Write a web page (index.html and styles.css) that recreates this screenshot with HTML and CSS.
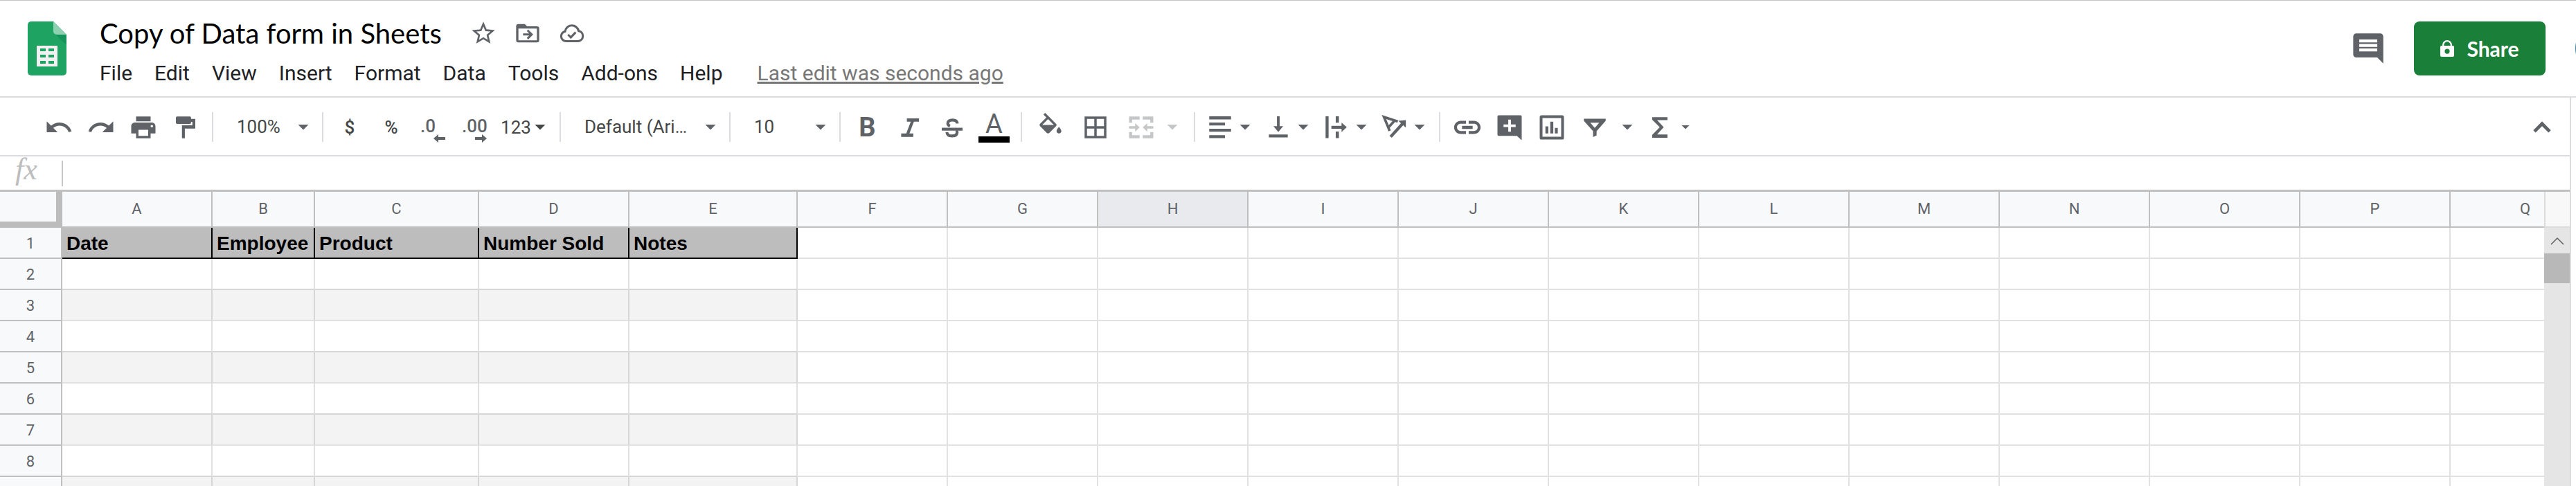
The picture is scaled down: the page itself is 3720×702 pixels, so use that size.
FILE: index.html
```html
<!DOCTYPE html>
<html lang="en">
<head>
<meta charset="utf-8">
<title>Copy of Data form in Sheets</title>
<link rel="stylesheet" href="styles.css">
</head>
<body>
<header class="top">
  <svg class="logo" viewBox="0 0 56 78" aria-hidden="true">
    <path d="M5 0h32l19 19v54a5 5 0 0 1-5 5H5a5 5 0 0 1-5-5V5a5 5 0 0 1 5-5z" fill="#1ea362"/>
    <path d="M38 17l18 17V19z" fill="#16935a"/>
    <path d="M37 0l19 19H42a5 5 0 0 1-5-5z" fill="#8ed1b1"/>
    <path fill-rule="evenodd" fill="#f1f1f1" d="M13 35h30v30H13zM18 39v4h8v-4zM30 39v4h8v-4zM18 48v4h8v-4zM30 48v4h8v-4zM18 57v4h8v-4zM30 57v4h8v-4z"/>
  </svg>
  <div class="doc">
    <div class="title-row">
      <h1 class="title">Copy of Data form in Sheets</h1>
      <div class="title-actions">
        <button class="plain" aria-label="Star"><svg viewBox="0 0 24 24"><path d="M22 9.24l-7.19-.62L12 2 9.19 8.63 2 9.24l5.46 4.73L5.82 21 12 17.27 18.18 21l-1.63-7.03L22 9.24zM12 15.4l-3.76 2.27 1-4.28-3.32-2.88 4.38-.38L12 6.1l1.71 4.04 4.38.38-3.32 2.88 1 4.28L12 15.4z"/></svg></button>
        <button class="plain" aria-label="Move"><svg viewBox="0 0 24 24"><path fill-rule="evenodd" d="M4 4h5.500l2 2H20a2 2 0 0 1 2 2v10a2 2 0 0 1-2 2H4a2 2 0 0 1-2-2V6a2 2 0 0 1 2-2zM4 8v10.200h16V8zM12.500 8.800l4.300 4.300-4.300 4.300-1.300-1.300 2.100-2.100H8v-1.900h5.300l-2.100-2.100z"/></svg></button>
        <button class="plain" aria-label="See document status"><svg viewBox="0 0 24 24"><path d="M7 18.900a4.300 4.300 0 0 1-1-8.500A6 6 0 0 1 17.800 10a4.500 4.500 0 0 1-.5 8.900z" fill="none" stroke="currentColor" stroke-width="1.900"/><path d="M8.600 13.200l2.400 2.400 4.200-4.400" fill="none" stroke="currentColor" stroke-width="1.900"/></svg></button>
      </div>
    </div>
    <nav class="menus">
      <button>File</button><button>Edit</button><button>View</button><button>Insert</button><button>Format</button><button>Data</button><button>Tools</button><button>Add-ons</button><button>Help</button>
      <a class="history" href="#history">Last edit was seconds ago</a>
    </nav>
  </div>
  <div class="top-right">
    <button class="plain comments" aria-label="Open comment history"><svg viewBox="0 0 24 24"><path d="M22 4c0-1.100-.9-2-2-2H4c-1.100 0-2 .9-2 2v12c0 1.100.9 2 2 2h14l4 4zM18 14H6v-2h12v2zm0-3H6V9h12v2zm0-3H6V6h12v2z"/></svg></button>
    <button class="share"><svg viewBox="0 0 20 24" aria-hidden="true"><path fill-rule="evenodd" d="M3 8V7a7 7 0 0 1 14 0v1h1a2 2 0 0 1 2 2v12a2 2 0 0 1-2 2H2a2 2 0 0 1-2-2V10a2 2 0 0 1 2-2zM5.300 8h9.400V7a4.700 4.700 0 0 0-9.400 0zM10 12.500a3.600 3.600 0 1 0 0 7.200 3.600 3.600 0 0 0 0-7.200z"/></svg>Share</button>
    <span class="avatar"></span>
  </div>
</header>
<div class="work">
<main class="editor">
  <div class="toolbar" role="toolbar" aria-label="Main">
    <button class="tool" aria-label="Undo"><svg viewBox="0 0 24 24"><path d="M12.500 8c-2.650 0-5.050.99-6.900 2.600L2 7v9h9l-3.620-3.620c1.390-1.160 3.160-1.880 5.120-1.880 3.540 0 6.550 2.310 7.600 5.500l2.370-.78C21.080 11.030 17.150 8 12.500 8z"/></svg></button>
    <button class="tool" aria-label="Redo"><svg viewBox="0 0 24 24"><path d="M18.400 10.600C16.550 8.990 14.150 8 11.500 8c-4.650 0-8.580 3.030-9.960 7.220L3.900 16c1.050-3.190 4.050-5.500 7.600-5.500 1.950 0 3.730.72 5.120 1.880L13 16h9V7z"/></svg></button>
    <button class="tool" aria-label="Print"><svg viewBox="0 0 24 24"><path d="M19 8H5c-1.660 0-3 1.340-3 3v6h4v4h12v-4h4v-6c0-1.660-1.340-3-3-3zm-3 11H8v-5h8v5zm3-7c-.55 0-1-.45-1-1s.45-1 1-1 1 .45 1 1-.45 1-1 1zm-1-9H6v4h12z"/></svg></button>
    <button class="tool" aria-label="Paint format"><svg viewBox="0 0 24 24"><path d="M5 3h10.500a1 1 0 0 1 1 1v1H20v8h-8.600v8H9V10.300h8.600V7.400h-1.100v.8a1 1 0 0 1-1 1H5a1 1 0 0 1-1-1V4a1 1 0 0 1 1-1z"/></svg></button>
    <span class="sep"></span>
    <label class="pick"><select aria-label="Zoom"><option>100%</option></select></label>
    <span class="sep"></span>
    <button class="tool money">$</button>
    <button class="tool money">%</button>
    <button class="tool decimal" aria-label="Decrease decimal places"><span>.0</span><svg viewBox="0 0 17 12"><path d="M0 6l7-6v4h10v4H7v4z"/></svg></button>
    <button class="tool decimal" aria-label="Increase decimal places"><span>.00</span><svg viewBox="0 0 17 12"><path d="M17 6l-7-6v4H0v4h10v4z"/></svg></button>
    <button class="tool formats">123<i class="caret"></i></button>
    <span class="sep"></span>
    <label class="pick family"><select aria-label="Font"><option>Default (Ari…</option></select></label>
    <span class="sep"></span>
    <label class="pick"><select aria-label="Font size"><option>10</option></select></label>
    <span class="sep"></span>
    <button class="tool bold">B</button>
    <button class="tool" aria-label="Italic"><svg viewBox="0 0 24 24"><path d="M9.500 4.500v2.800h3.200L9 17H4.800v2.800h10V17h-3.200l3.700-9.700h4.200V4.500z"/></svg></button>
    <button class="tool" aria-label="Strikethrough"><svg viewBox="0 0 24 24"><path d="M3.400 12.300h17.200v2.400H3.400z"/><path d="M16.300 8.800c-.2-2-1.800-2.900-4-2.900-2.300 0-3.900 1-3.900 2.800 0 1 .6 1.700 1.800 2.200M7.700 16c.1 2.100 1.800 3.100 4.200 3.100 2.500 0 4.200-1 4.200-2.900 0-.6-.2-1.200-.6-1.700" fill="none" stroke="currentColor" stroke-width="2.400"/></svg></button>
    <button class="tool ink"><span>A</span><i class="swatch"></i></button>
    <span class="sep"></span>
    <button class="tool wide" aria-label="Fill color"><svg viewBox="0 0 24 24"><path d="M16.560 8.940L7.620 0 6.210 1.410l2.380 2.380-5.150 5.150c-.59.59-.59 1.540 0 2.120l5.500 5.500c.29.29.68.44 1.060.44s.77-.15 1.060-.44l5.500-5.500c.59-.58.59-1.530 0-2.120zM5.210 10L10 5.210 14.790 10H5.210zM19 11.500s-2 2.170-2 3.500c0 1.100.9 2 2 2s2-.9 2-2c0-1.330-2-3.500-2-3.500z"/></svg></button>
    <button class="tool wide" aria-label="Borders"><svg viewBox="0 0 24 24"><path d="M3 3v18h18V3H3zm8 16H5v-6h6v6zm0-8H5V5h6v6zm8 8h-6v-6h6v6zm0-8h-6V5h6v6z"/></svg></button>
    <button class="tool merge" aria-label="Merge cells" disabled><svg viewBox="0 0 24 24"><path d="M2 3h8.700v2.600H4.500v2.600H2zM22 3h-8.700v2.600h6.200v2.600H22zM2 21h8.700v-2.600H4.500v-2.600H2zM22 21h-8.700v-2.600h6.200v-2.600H22zM2 11h5V8.500l3.700 3.500L7 15.500V13H2zM22 11h-5V8.500L13.300 12l3.700 3.500V13h5z"/></svg><i class="caret"></i></button>
    <span class="sep"></span>
    <button class="tool split" aria-label="Horizontal align"><svg viewBox="0 0 24 24"><path d="M3 2.800h18v2.600H3zM3 8h13v2.400H3zM3 13.200h18v2.400H3zM3 18.400h13v2.400H3z"/></svg><i class="caret"></i></button>
    <button class="tool split" aria-label="Vertical align"><svg viewBox="0 0 24 24"><path d="M16 11h-2.900V2.800h-2.200V11H8l4 4.800zM4.200 17.800v2.500h15.600v-2.500z"/></svg><i class="caret"></i></button>
    <button class="tool split" aria-label="Text wrapping"><svg viewBox="0 0 24 24"><path d="M3 2.800h2.500v18H3zM11.400 2.800H14v5.400h-2.600zM11.400 15.400H14v5.400h-2.600zM7.800 10.700h8.400V8l4.300 3.900-4.300 3.900v-2.700H7.800z"/></svg><i class="caret"></i></button>
    <button class="tool split" aria-label="Text rotation"><svg viewBox="0 0 24 24"><path d="M14.600 7.200L3.200 3.400l4.700 11.500M12 6.400l-5 5.400" fill="none" stroke="currentColor" stroke-width="2.100"/><path d="M8.700 19.800L18.500 9" fill="none" stroke="currentColor" stroke-width="2.500"/><path d="M21.200 6v6.200L15 6.600z"/></svg><i class="caret"></i></button>
    <span class="sep"></span>
    <button class="tool" aria-label="Insert link"><svg viewBox="1 1 22 22"><path d="M4.200 12c0-1.600 1.200-2.700 2.800-2.700h4V7H7c-2.760 0-5 2.240-5 5s2.240 5 5 5h4v-2.300H7c-1.600 0-2.800-1.100-2.800-2.700zM8 13.200h8v-2.400H8zM17 7h-4v2.300h4c1.600 0 2.800 1.100 2.800 2.700s-1.200 2.700-2.800 2.700h-4V17h4c2.760 0 5-2.240 5-5s-2.240-5-5-5z"/></svg></button>
    <button class="tool" aria-label="Insert comment"><svg viewBox="0 0 24 24"><path fill-rule="evenodd" d="M3 2h18a1 1 0 0 1 1 1v19.500L18 19H3a1 1 0 0 1-1-1V3a1 1 0 0 1 1-1zM10.900 5.600v3.900H7v2.200h3.900v3.900h2.200v-3.900H17V9.500h-3.900V5.600z"/></svg></button>
    <button class="tool" aria-label="Insert chart"><svg viewBox="0 0 24 24"><path fill-rule="evenodd" d="M3.500 2h17A1.500 1.500 0 0 1 22 3.500v17a1.500 1.500 0 0 1-1.500 1.500h-17A1.500 1.500 0 0 1 2 20.500v-17A1.500 1.500 0 0 1 3.500 2zM4.300 4.300v15.400h15.400V4.300zM6.700 11.100h2.400V17H6.700zM10.700 7.300h2.500V17h-2.500zM14.500 12.400h2.400V17h-2.400z"/></svg></button>
    <button class="tool filter" aria-label="Filter"><svg viewBox="0 0 24 24"><path fill-rule="evenodd" d="M3 4.800h18v1.700l-7.500 8.700v3.300L10.600 20v-4.800L3 6.500zM8.300 8.200l3.700 4.200 3.700-4.200z"/></svg><i class="caret"></i></button>
    <button class="tool sum" aria-label="Functions"><svg viewBox="0 0 24 24"><path d="M18.300 3.500H5.700v2.200l6.200 6.200-6.200 6.200v2.400h12.600v-2.600H9.700l5.500-6-5.500-5.900h8.600z"/></svg><i class="caret small"></i></button>
    <button class="tool collapse" aria-label="Hide the menus"><svg viewBox="0 0 24 24"><path d="M7.500 15.600L12 11.100l4.500 4.500 1.600-1.600L12 7.800 5.900 14z"/></svg></button>
  </div>
  <div class="formula">
    <label class="fx" for="formula">fx</label>
    <input id="formula" type="text">
  </div>
  <div class="sheet">
    <div class="grid">
      <table>
        <colgroup><col class="c-num"><col class="c-std"><col class="c-b"><col class="c-c"><col class="c-std"><col class="c-e"><col class="c-std" span="12"></colgroup>
        <thead><tr><td class="corner"></td><th>A</th><th>B</th><th>C</th><th>D</th><th>E</th><th>F</th><th>G</th><th class="hover">H</th><th>I</th><th>J</th><th>K</th><th>L</th><th>M</th><th>N</th><th>O</th><th>P</th><th>Q</th></tr></thead>
        <tbody>
          <tr class="fields"><th>1</th><td>Date</td><td>Employee</td><td>Product</td><td>Number Sold</td><td>Notes</td><td></td><td></td><td></td><td></td><td></td><td></td><td></td><td></td><td></td><td></td><td></td><td></td></tr>
          <tr><th>2</th><td></td><td></td><td></td><td></td><td></td><td></td><td></td><td></td><td></td><td></td><td></td><td></td><td></td><td></td><td></td><td></td><td></td></tr>
          <tr><th>3</th><td></td><td></td><td></td><td></td><td></td><td></td><td></td><td></td><td></td><td></td><td></td><td></td><td></td><td></td><td></td><td></td><td></td></tr>
          <tr><th>4</th><td></td><td></td><td></td><td></td><td></td><td></td><td></td><td></td><td></td><td></td><td></td><td></td><td></td><td></td><td></td><td></td><td></td></tr>
          <tr><th>5</th><td></td><td></td><td></td><td></td><td></td><td></td><td></td><td></td><td></td><td></td><td></td><td></td><td></td><td></td><td></td><td></td><td></td></tr>
          <tr><th>6</th><td></td><td></td><td></td><td></td><td></td><td></td><td></td><td></td><td></td><td></td><td></td><td></td><td></td><td></td><td></td><td></td><td></td></tr>
          <tr><th>7</th><td></td><td></td><td></td><td></td><td></td><td></td><td></td><td></td><td></td><td></td><td></td><td></td><td></td><td></td><td></td><td></td><td></td></tr>
          <tr><th>8</th><td></td><td></td><td></td><td></td><td></td><td></td><td></td><td></td><td></td><td></td><td></td><td></td><td></td><td></td><td></td><td></td><td></td></tr>
          <tr><th></th><td></td><td></td><td></td><td></td><td></td><td></td><td></td><td></td><td></td><td></td><td></td><td></td><td></td><td></td><td></td><td></td><td></td></tr>
        </tbody>
      </table>
    </div>
    <div class="scroll">
      <div class="scroll-head"></div>
      <button class="scroll-up" aria-label="Scroll up"><svg viewBox="0 0 20 12"><path d="M1 11l9-9 9 9" fill="none" stroke="#606060" stroke-width="1.500"/></svg></button>
      <div class="thumb"></div>
    </div>
  </div>
</main>
<aside class="side"></aside>
</div>
</body>
</html>
```
FILE: styles.css
```css
* { box-sizing: border-box; }

body {
  margin: 0;
  height: 100vh;
  display: flex;
  flex-direction: column;
  overflow: hidden;
  background: #fff;
  color: #202124;
  font-family: Roboto, "Liberation Sans", sans-serif;
}

button, select, input { font: inherit; color: inherit; }
button { border: 0; padding: 0; background: none; white-space: nowrap; }
svg { display: block; fill: currentColor; flex: none; }

/* Title bar */
.top {
  display: flex;
  flex: none;
  align-items: flex-start;
  overflow: hidden;
  border-top: 1px solid #c6c6c6;
  border-bottom: 2px solid #dadce0;
}
.logo { width: 56px; height: 78px; margin: 30px 48px 0 40px; }
.doc { padding: 25px 0 15px; }
.title-row { display: flex; align-items: center; gap: 40px; height: 44px; }
.title {
  margin: 0;
  font: 400 40px/44px Lato, "Open Sans", sans-serif;
  color: #000;
  white-space: nowrap;
}
.title-actions { display: flex; gap: 24px; }
.plain { color: #5f6368; }
.plain svg { width: 40px; height: 40px; }
.menus { display: flex; gap: 32px; margin-top: 18px; font-size: 30px; line-height: 36px; }
.history { margin-left: 18px; color: #777; white-space: nowrap; }
.top-right { display: flex; align-items: center; margin: 30px 0 0 auto; height: 78px; }
.comments svg { width: 52px; height: 52px; }
.share {
  display: flex;
  align-items: center;
  justify-content: center;
  gap: 18px;
  width: 190px;
  height: 78px;
  margin-left: 40px;
  border-radius: 8px;
  background: #1a8039;
  color: #fff;
  font: 700 30px/36px Lato, "Open Sans", sans-serif;
}
.share svg { width: 20px; height: 24px; }
.avatar {
  flex: none;
  width: 78px;
  height: 78px;
  margin: 0 -77px 0 43px;
  border-radius: 50%;
  background: #2c86ad;
}

.work { display: flex; flex: 1; min-height: 0; }
.editor { display: flex; flex-direction: column; flex: 1; min-width: 0; }
.side { width: 9px; border-left: 2px solid #dadce0; }

/* Toolbar */
.toolbar {
  display: flex;
  flex: none;
  align-items: center;
  height: 85px;
  padding: 2px 10px 0 54px;
  border-bottom: 2px solid #dadce0;
  color: #5f6368;
  font-size: 26px;
  overflow: hidden;
}
.tool {
  display: flex;
  flex: none;
  align-items: center;
  justify-content: center;
  width: 61px;
  height: 46px;
}
.tool svg { width: 42px; height: 42px; }
.sep { flex: none; width: 2px; height: 43px; margin: 0 8px; background: #dadce0; }
.caret {
  flex: none;
  width: 16px;
  height: 8px;
  background: currentColor;
  clip-path: polygon(0 0, 100% 0, 50% 100%);
}
.caret.small { width: 12px; height: 6px; }
.pick {
  position: relative;
  flex: none;
  width: 141px;
  color: #444746;
}
.pick.family { width: 227px; }
.pick::after {
  content: "";
  position: absolute;
  right: 11px;
  top: 19px;
  width: 16px;
  height: 8px;
  background: #5f6368;
  clip-path: polygon(0 0, 100% 0, 50% 100%);
  pointer-events: none;
}
.pick select {
  appearance: none;
  display: block;
  width: 100%;
  height: 46px;
  padding: 0 30px 2px 26px;
  border: 0;
  background: none;
}
.money { width: 60px; color: #444746; font-weight: 500; }
.tool.decimal {
  flex-direction: column;
  align-items: stretch;
  justify-content: flex-start;
  width: 60px;
  padding: 9px 12px 0;
  font-weight: 500;
  line-height: 24px;
  text-align: left;
}
.tool.decimal svg { width: 17px; height: 12px; align-self: flex-end; }
.formats { width: 85px; gap: 5px; padding-right: 4px; color: #444746; }
.bold { font-size: 38px; font-weight: 700; }
.ink {
  flex-direction: column;
  justify-content: flex-start;
  font-size: 38px;
  line-height: 36px;
}
.swatch { width: 45px; height: 9px; background: #000; }
.wide { width: 65px; }
.merge { width: 102px; gap: 16px; padding-right: 2px; color: #c4c6c8; }
.split { width: 84px; gap: 7px; padding-right: 5px; }
.filter { width: 98px; gap: 18px; }
.sum { width: 78px; gap: 10px; }
.collapse { margin-left: auto; }
.tool.collapse svg { width: 50px; height: 50px; }

/* Formula bar */
.formula { display: flex; flex: none; height: 48px; }
.fx {
  width: 89px;
  padding-left: 22px;
  color: #bdbdbd;
  font: italic 44px/38px "Liberation Serif", serif;
}
.formula input {
  flex: 1;
  height: 37px;
  margin-top: 6px;
  border: 0;
  border-left: 2px solid #c7c7c7;
  padding: 0 8px;
  outline: 0;
}

/* Sheet */
.sheet { display: flex; flex: 1; min-height: 0; border-top: 3px solid #c0c0c0; }
.grid { flex: 1; min-width: 0; overflow: hidden; }
table { width: 3756px; table-layout: fixed; border-collapse: separate; border-spacing: 0; }
.c-num { width: 90px; }
.c-std { width: 217px; }
.c-b { width: 148px; }
.c-c { width: 237px; }
.c-e { width: 243px; }
th, td { padding: 0; border: solid #e1e1e1; border-width: 0 2px 2px 0; }
th {
  height: 45px;
  padding-top: 2px;
  border-color: #c0c0c0;
  background: #f8f9fa;
  color: #5f6368;
  font-size: 22px;
  font-weight: 400;
  line-height: 26px;
}
thead th { height: 52px; padding-top: 0; background: #f8f9fb; }
thead .hover { background: #e8eaed; }
.corner { border: solid #bcbcbc; border-width: 0 9px 9px 0; background: #f8f9fb; }
tbody tr:nth-child(odd) td:nth-child(-n+6) { background: #f3f3f3; border-right-color: #d6d6d6; }
tbody tr:nth-child(even) td:nth-child(-n+6) { border-bottom-color: #d6d6d6; }
tbody tr.fields:nth-child(odd) td:nth-child(-n+6) {
  padding: 2px 0 0 6px;
  border-color: #000;
  background: #bdbdbd;
  color: #000;
  font: 700 28px/32px "Liberation Sans", Arial, sans-serif;
  white-space: nowrap;
}

.scroll { width: 37px; background: #e5e5e5; }
.scroll-head {
  height: 52px;
  border: solid #dcdcdc;
  border-width: 0 0 2px 2px;
  background: #f8f8f8;
}
.scroll-up { display: flex; align-items: center; justify-content: center; width: 100%; height: 37px; }
.scroll-up svg { width: 20px; height: 12px; }
.thumb { height: 43px; background: #b8b8b8; }
```
